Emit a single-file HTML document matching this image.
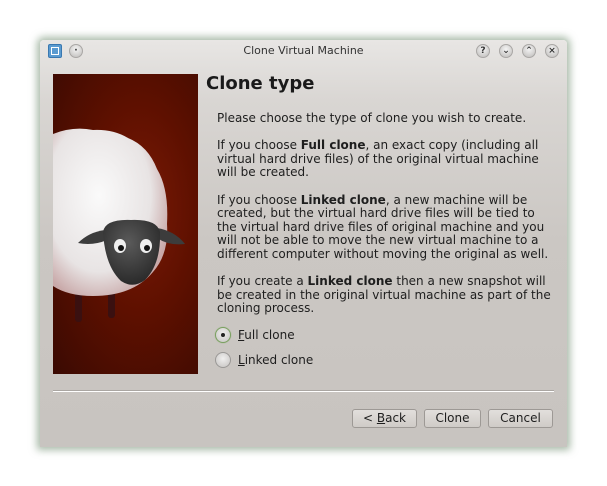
<!DOCTYPE html>
<html><head><style>
*{margin:0;padding:0;box-sizing:border-box}
body{width:607px;height:486px;background:#fff;position:relative;overflow:hidden;font-family:"DejaVu Sans","Liberation Sans",sans-serif;font-size:12px;color:#1e1e1e}
.win{position:absolute;left:40px;top:40px;width:527px;height:407px;background:linear-gradient(#e8e6e4 0,#d9d6d3 60px,#cbc7c3 200px,#c8c4c0 100%);border-radius:4px 4px 0 0;box-shadow:0 0 8px 3px rgba(110,140,110,.6)}
.title{position:absolute;left:0;top:0;width:100%;height:22px;text-align:center;line-height:22px;font-size:11px;color:#333}
.tb{position:absolute;top:4px;width:14px;height:14px;border-radius:50%;background:radial-gradient(circle at 50% 35%,#f4f4f4,#bdbbb9);border:1px solid #a9a7a5;font-size:9px;line-height:12px;text-align:center;color:#333;font-weight:bold}
.img{position:absolute;left:13px;top:34px;width:145px;height:300px;background:radial-gradient(ellipse at 60% 45%,#7a1a06 0%,#5e1000 45%,#3a0a02 100%);overflow:hidden}
h1{position:absolute;left:166px;top:33px;font-size:18px;font-weight:bold;color:#1a1a1a}
.txt{position:absolute;left:177px;top:72px;width:340px;line-height:13.6px}
.txt p{margin-bottom:13.6px}
.radio{position:absolute;left:175px;width:16px;height:16px;border-radius:50%;background:radial-gradient(circle at 50% 40%,#f0efee,#c4c2c0);border:1px solid #9a9896}
.lbl{position:absolute;left:198px}
.sep{position:absolute;left:13px;top:350px;width:501px;height:2px;border-bottom:1px solid #fff;border-top:1px solid #aaa6a2}
.btn{position:absolute;top:369px;height:19px;border:1px solid #9d9995;border-radius:3px;background:linear-gradient(#e2dfdc,#cfcbc7);text-align:center;line-height:17px;font-size:12px}
u{text-decoration:underline}
</style></head><body>
<div class="win">
<div class="title">Clone Virtual Machine</div>
<div style="position:absolute;left:8px;top:4px;width:14px;height:14px;background:#5b9bd0;border:1px solid #3a78b0;border-radius:2px"><div style="margin:2px;width:8px;height:8px;border:1px solid #fff"></div></div>
<div class="tb" style="left:29px">·</div>
<div class="tb" style="left:436px">?</div>
<div class="tb" style="left:459px">⌄</div>
<div class="tb" style="left:482px">⌃</div>
<div class="tb" style="left:505px">×</div>
<div class="img">
<svg width="145" height="300" viewBox="0 0 145 300">
<defs><radialGradient id="w" cx="40%" cy="40%" r="65%"><stop offset="0" stop-color="#fafafa"/><stop offset=".7" stop-color="#e8e4e4"/><stop offset="1" stop-color="#c9a9a9"/></radialGradient>
<radialGradient id="f" cx="45%" cy="35%" r="65%"><stop offset="0" stop-color="#5a5a5a"/><stop offset="1" stop-color="#2a2a2a"/></radialGradient></defs>
<rect x="22" y="200" width="7" height="48" rx="3" fill="#3a1010"/>
<rect x="55" y="200" width="7" height="44" rx="3" fill="#3a1010"/>
<path d="M0 60 Q20 52 40 56 Q60 55 75 64 Q95 72 104 95 Q116 115 114 150 Q116 180 100 198 Q80 222 40 222 Q15 222 0 212 Z" fill="url(#w)"/>
<path d="M52 156 Q36 158 25 169 Q40 172 54 166 Z" fill="#3c3c3c"/>
<path d="M104 154 Q122 157 132 170 Q116 172 104 164 Z" fill="#3c3c3c"/>
<path d="M50 158 Q52 145 78 146 Q104 145 107 158 Q108 190 92 206 Q80 215 68 207 Q52 192 50 158 Z" fill="url(#f)"/>
<ellipse cx="67" cy="172" rx="6" ry="7" fill="#eee"/><circle cx="68" cy="174" r="3" fill="#111"/>
<ellipse cx="93" cy="172" rx="6" ry="7" fill="#eee"/><circle cx="94" cy="174" r="3" fill="#111"/>
</svg></div>
<h1>Clone type</h1>
<div class="txt">
<p>Please choose the type of clone you wish to create.</p>
<p>If you choose <b>Full clone</b>, an exact copy (including all virtual hard drive files) of the original virtual machine will be created.</p>
<p>If you choose <b>Linked clone</b>, a new machine will be created, but the virtual hard drive files will be tied to the virtual hard drive files of original machine and you will not be able to move the new virtual machine to a different computer without moving the original as well.</p>
<p>If you create a <b>Linked clone</b> then a new snapshot will be created in the original virtual machine as part of the cloning process.</p>
</div>
<div class="radio" style="top:287px;border-color:#7aa060;box-shadow:0 0 1px #8ab070"><div style="width:4px;height:4px;background:#222;border-radius:50%;margin:5px"></div></div>
<div class="lbl" style="top:288px"><u>F</u>ull clone</div>
<div class="radio" style="top:312px"></div>
<div class="lbl" style="top:313px"><u>L</u>inked clone</div>
<div class="sep"></div>
<div class="btn" style="left:312px;width:65px">&lt; <u>B</u>ack</div>
<div class="btn" style="left:384px;width:57px">Clone</div>
<div class="btn" style="left:448px;width:65px">Cancel</div>
</div>
</body></html>
